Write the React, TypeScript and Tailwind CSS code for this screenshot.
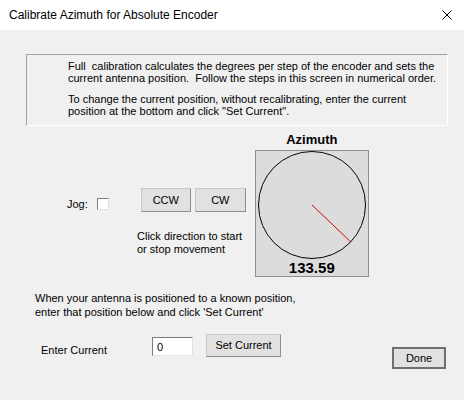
import { useState } from "react";

const font = { fontFamily: '"Liberation Sans", Arial, sans-serif' };

const Dial = ({ angle }: { angle: number }) => {
  const cx = 56;
  const cy = 54.5;
  const r = 54;
  const rad = (angle * Math.PI) / 180;
  const x2 = cx + r * Math.sin(rad);
  const y2 = cy - r * Math.cos(rad);
  return (
    <svg width="112" height="110" viewBox="0 0 112 110" className="block">
      <circle cx={cx} cy={cy} r={r} fill="none" stroke="#000" strokeWidth="1" />
      <line x1={cx} y1={cy} x2={x2} y2={y2} stroke="#d40000" strokeWidth="1" />
    </svg>
  );
};

export default function App() {
  const [current, setCurrent] = useState("0");
  const [jog, setJog] = useState(false);
  const azimuth = 133.59;

  return (
    <div
      className="w-[464px] h-[400px] bg-[#f0f0f0] text-black text-[11px] leading-[13px] overflow-hidden"
      style={font}
    >
      {/* title bar */}
      <div className="h-[30px] bg-white flex items-center justify-between pl-[9px] pr-[12px]">
        <span className="text-[12px] leading-[16px]">
          Calibrate Azimuth for Absolute Encoder
        </span>
        <svg width="10" height="10" viewBox="0 0 10 10" className="block">
          <path d="M0.5 0.5 L9.5 9.5 M9.5 0.5 L0.5 9.5" stroke="#000" strokeWidth="1" />
        </svg>
      </div>

      {/* info panel */}
      <div className="mt-[24px] ml-[26px] w-[422px] h-[72px] border border-[#a0a0a0] border-r-white border-b-white pl-[41px] pt-[5px] leading-[12px]">
        <p className="whitespace-pre">
          {"Full  calibration calculates the degrees per step of the encoder and sets the"}
          <br />
          {"current antenna position.  Follow the steps in this screen in numerical order."}
        </p>
        <p className="mt-[9px]">
          To change the current position, without recalibrating, enter the current
          <br />
          position at the bottom and click "Set Current".
        </p>
      </div>

      {/* jog + dial */}
      <div className="flex items-start">
        <div className="ml-[67px] mt-[62px] flex flex-col">
          <div className="flex items-start">
            <span className="mt-[10px]">Jog:</span>
            <label className="ml-[9px] mt-[10px] w-[12px] h-[12px] bg-white border border-[#808080] border-r-[#e3e3e3] border-b-[#e3e3e3] cursor-pointer">
              <input
                type="checkbox"
                className="hidden"
                checked={jog}
                onChange={(e) => setJog(e.target.checked)}
              />
            </label>
            <div className="ml-[32px] flex gap-[4px]">
              <button className="w-[50px] h-[24px] bg-[#e1e1e1] border border-[#c9c9c9] border-r-[#8d8d8d] border-b-[#8d8d8d]">
                CCW
              </button>
              <button className="w-[51px] h-[24px] bg-[#e1e1e1] border border-[#c9c9c9] border-r-[#8d8d8d] border-b-[#8d8d8d]">
                CW
              </button>
            </div>
          </div>
          <p className="ml-[70px] mt-[18px]">
            Click direction to start
            <br />
            or stop movement
          </p>
        </div>

        <div className="ml-[9px] mt-[6px] w-[114px] flex flex-col items-center">
          <span className="text-[13px] leading-[16px] font-bold">Azimuth</span>
          <div className="mt-[2px] w-[114px] h-[127px] bg-[#dcdcdc] border border-[#8f8f8f] flex flex-col items-center">
            <Dial angle={azimuth} />
            <span className="text-[15px] leading-[16px] font-bold">
              {azimuth.toFixed(2)}
            </span>
          </div>
        </div>
      </div>

      {/* bottom */}
      <p className="ml-[35px] mt-[14px] leading-[14px]">
        When your antenna is positioned to a known position,
        <br />
        enter that position below and click 'Set Current'
      </p>

      <div className="flex items-start">
        <span className="ml-[41px] mt-[25px]">Enter Current</span>
        <input
          className="ml-[45px] mt-[18px] w-[41px] h-[19px] bg-white border border-[#7a7a7a] border-r-[#e3e3e3] border-b-[#e3e3e3] px-[4px] outline-none text-[11px]"
          value={current}
          onChange={(e) => setCurrent(e.target.value)}
        />
        <button className="ml-[13px] mt-[15px] w-[75px] h-[23px] bg-[#e1e1e1] border border-[#c9c9c9] border-r-[#8d8d8d] border-b-[#8d8d8d]">
          Set Current
        </button>
        <button className="ml-[111px] mt-[28px] w-[54px] h-[22px] bg-[#e1e1e1] border-2 border-[#6f6f6f]">
          Done
        </button>
      </div>
    </div>
  );
}
